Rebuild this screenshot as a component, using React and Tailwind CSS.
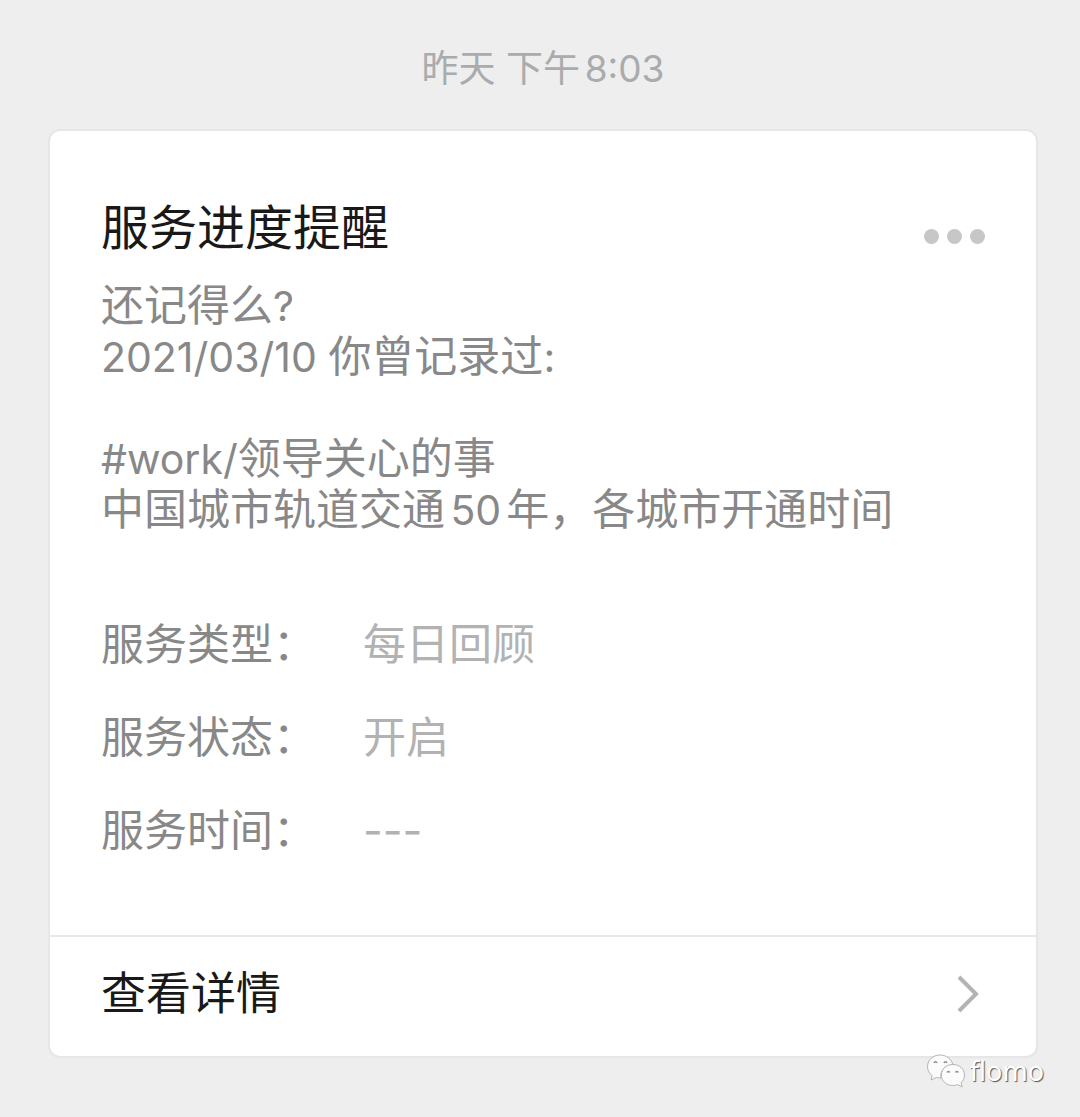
import React from 'react';

const details = [
  { label: '服务类型：', value: '每日回顾' },
  { label: '服务状态：', value: '开启' },
  { label: '服务时间：', value: '---' },
];

function WeChatMark() {
  return (
    <svg viewBox="0 0 40 36" className="h-9 w-10" fill="#fbfbfb" stroke="#b4b4b4" strokeWidth="1">
      <path d="M14 2C7 2 1.500 7 1.500 13.500c0 4 1.700 7 4.700 9.200L5 27l5.500-2.500c1.500.4 3 .6 4.500.5C13.500 18 19 12 27 11.800 25.500 6 20.500 2 14 2z" />
      <path d="M38.500 22c0-6-5.200-10.500-11.600-10.500S15.300 16 15.300 22s5.200 10.500 11.600 10.500c1.800 0 3.400-.3 4.900-.9l4.400 2.400-1.100-4.300c2.100-2 3.400-4.600 3.400-7.700z" />
      <g fill="none" stroke="#8f8f8f" strokeWidth="1.500">
        <path d="M8 10c.6-1.600 2.400-1.600 3 0M18 10c.6-1.600 2.400-1.600 3 0M21 19.500c.5-1.400 2.300-1.400 2.800 0M29.500 19.500c.5-1.400 2.300-1.400 2.800 0" />
      </g>
    </svg>
  );
}

function Chevron() {
  return (
    <svg viewBox="0 0 24 40" className="mr-1 h-10 w-6" fill="none" stroke="#b2b3b5" strokeWidth="4">
      <path d="M2 3l17 17L2 37" />
    </svg>
  );
}

// Latin runs sit slightly smaller than the Chinese text around them
function Latin({ children }) {
  return <span className="text-[41px] leading-none">{children}</span>;
}

export default function App() {
  return (
    <div className="relative min-h-screen bg-[#eeeeee] pt-10 pr-[42px] pb-[59px] pl-12 font-['Inter','Noto_Sans_CJK_SC',sans-serif] [text-autospace:normal]">
      <p className="mb-8 text-center text-[37px] leading-[57px] text-[#a9abad]">昨天 下午8:03</p>

      <main className="rounded-xl border-2 border-[#e6e6e6] bg-white">
        <section className="px-[51px] pt-[67px] pb-[74px]">
          <header className="flex items-center justify-between">
            <h1 className="text-[48px] leading-[60px] text-[#191919]">服务进度提醒</h1>
            <button type="button" aria-label="更多" className="mt-4 flex gap-2">
              <span className="size-[15px] rounded-full bg-[#c7c7c7]" />
              <span className="size-[15px] rounded-full bg-[#c7c7c7]" />
              <span className="size-[15px] rounded-full bg-[#c7c7c7]" />
            </button>
          </header>

          <div className="mt-[22px] text-[43px] leading-[51px] text-[#888888]">
            <p>还记得么<Latin>?</Latin></p>
            <p><Latin>2021/03/10 </Latin>你曾记录过<Latin>:</Latin></p>
            <br />
            <p><Latin>#work/</Latin>领导关心的事</p>
            <p>中国城市轨道交通<Latin>50</Latin>年，各城市开通时间</p>
          </div>

          <dl className="mt-[79px] flex flex-col gap-8 text-[43px] leading-[61px]">
            {details.map((item) => (
              <div key={item.label} className="flex">
                <dt className="w-[262px] text-[#888888]">{item.label}</dt>
                <dd className="text-[#b2b2b2]">{item.value}</dd>
              </div>
            ))}
          </dl>
        </section>

        <a href="#detail" className="flex items-center justify-between border-t-2 border-[#e8e8e8] px-[51px] pt-[25px] pb-[30px] text-[45px] leading-[64px] text-[#191919]">
          查看详情
          <Chevron />
        </a>
      </main>

      <div className="absolute right-9 bottom-7 flex items-center gap-1 font-['Noto_Sans',sans-serif] text-[27px] leading-9 text-white [text-shadow:1px_1px_1px_#555]">
        <WeChatMark />
        flomo
      </div>
    </div>
  );
}
